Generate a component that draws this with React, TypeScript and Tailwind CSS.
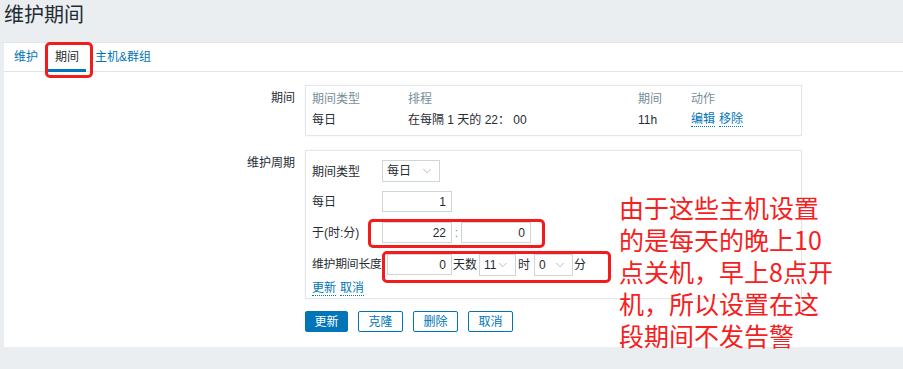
import { ChevronDown } from "lucide-react";

const font = "font-['Liberation_Sans','Noto_Sans_CJK_SC',sans-serif]";

const Select = ({ value, width }: { value: string; width: string }) => (
  <div
    className={`${width} h-[22px] border border-[#cfd6da] bg-white flex items-center justify-between pl-[4px] pr-[5px] text-[12px] text-[#1f2c33]`}
  >
    <span>{value}</span>
    <ChevronDown size={14} strokeWidth={1.1} className="text-[#8a9aa3]" />
  </div>
);

const NumInput = ({ value, width }: { value: string; width: string }) => (
  <div
    className={`${width} h-[21px] border border-[#cfd6da] bg-white flex items-center justify-end pr-[5px] text-[12px] text-[#1f2c33]`}
  >
    {value}
  </div>
);

const Link = ({ children }: { children: React.ReactNode }) => (
  <span className="text-[#0275b8] border-b border-dotted border-[#0275b8] leading-[14px]">
    {children}
  </span>
);

export default function App() {
  return (
    <div className={`${font} relative w-full h-[369px] bg-[#ebeef0] overflow-hidden text-[#1f2c33]`}>
      {/* Title */}
      <div className="h-[43px] pl-[4px] pt-[2px] text-[20px] leading-[26px] text-[#1f2c33] border-b border-[#e3e6e8]">
        维护期间
      </div>

      {/* Panel */}
      <div className="ml-[4px] bg-white h-[304px]">
        {/* Tabs */}
        <div className="h-[29px] flex items-stretch border-b border-[#dfe4e7] text-[12px]">
          <div className="pl-[10px] pr-[9px] flex items-center text-[#0275b8]">维护</div>
          <div className="px-[8px] flex items-center relative text-[#1f2c33]">
            期间
            <div className="absolute left-[1px] right-[1px] bottom-[-1px] h-[3px] bg-[#0275b8]" />
          </div>
          <div className="px-[8px] flex items-center text-[#0275b8]">主机&amp;群组</div>
        </div>

        {/* Form */}
        <div className="grid grid-cols-[291px_497px] gap-x-[10px] mt-[13px] text-[12px]">
          <div className="text-right pt-[4px]">期间</div>
          <div className="h-[51px] border border-[#e3e7ea] shadow-[0_0_2px_rgba(0,0,0,0.06)] px-[6px] pt-[2px]">
            <div className="grid grid-cols-[96px_230px_53px_1fr] h-[21px] items-center text-[#768d99]">
              <span>期间类型</span>
              <span>排程</span>
              <span>期间</span>
              <span>动作</span>
            </div>
            <div className="grid grid-cols-[96px_230px_53px_1fr] h-[21px] items-center">
              <span>每日</span>
              <span>在每隔 1 天的 22： 00</span>
              <span>11h</span>
              <span className="flex gap-[4px]">
                <Link>编辑</Link>
                <Link>移除</Link>
              </span>
            </div>
          </div>

          <div className="text-right pt-[4px] mt-[14px]">维护周期</div>
          <div className="mt-[14px] h-[149px] border border-[#e3e7ea] shadow-[0_0_2px_rgba(0,0,0,0.06)] pl-[6px] pt-[9px]">
            <div className="flex items-center h-[22px]">
              <span className="w-[70px] pt-[2px]">期间类型</span>
              <Select value="每日" width="w-[58px]" />
            </div>
            <div className="flex items-center h-[21px] mt-[9px]">
              <span className="w-[70px]">每日</span>
              <NumInput value="1" width="w-[70px]" />
            </div>
            <div className="flex items-center h-[21px] mt-[10px]">
              <span className="w-[70px]">于(时:分)</span>
              <NumInput value="22" width="w-[70px]" />
              <span className="w-[9px] text-center text-[#768d99]">:</span>
              <NumInput value="0" width="w-[70px]" />
            </div>
            <div className="flex items-center h-[21px] mt-[11px] whitespace-nowrap">
              <span className="w-[75px] text-[11.8px] tracking-[-0.2px]">维护期间长度</span>
              <NumInput value="0" width="w-[65px]" />
              <span className="ml-[1px] w-[26px]">天数</span>
              <Select value="11" width="w-[37px]" />
              <span className="ml-[2px] w-[16px]">时</span>
              <Select value="0" width="w-[39px]" />
              <span className="ml-[1px]">分</span>
            </div>
            <div className="flex gap-[4px] mt-[6px]">
              <Link>更新</Link>
              <Link>取消</Link>
            </div>
          </div>

          <div />
          <div className="flex gap-[10px] mt-[12px]">
            <div className="w-[43px] h-[21px] rounded-[2px] bg-[#0275b8] border border-[#0275b8] text-white flex items-center justify-center">
              更新
            </div>
            {["克隆", "删除", "取消"].map((t) => (
              <div
                key={t}
                className="w-[45px] h-[21px] rounded-[2px] bg-white border border-[#0275b8] text-[#0275b8] flex items-center justify-center"
              >
                {t}
              </div>
            ))}
          </div>
        </div>
      </div>

      {/* Red annotation boxes */}
      <div className="absolute left-[45px] top-[42px] w-[48px] h-[36px] border-[3px] border-[#f21c1c] rounded-[5px]" />
      <div className="absolute left-[368px] top-[219px] w-[177px] h-[29px] border-[3px] border-[#f21c1c] rounded-[5px]" />
      <div className="absolute left-[382px] top-[251px] w-[229px] h-[32px] border-[3px] border-[#f21c1c] rounded-[5px]" />

      {/* Annotation text */}
      <div className="absolute left-[619px] top-[191px] text-[25px] leading-[32px] text-[#f52020] font-['Noto_Sans_CJK_SC',sans-serif] whitespace-nowrap">
        <div>由于这些主机设置</div>
        <div>的是每天的晚上10</div>
        <div>点关机，早上8点开</div>
        <div>机，所以设置在这</div>
        <div>段期间不发告警</div>
      </div>
    </div>
  );
}
